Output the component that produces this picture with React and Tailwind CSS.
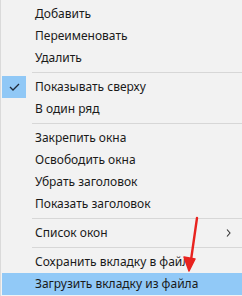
import React from 'react';

const groups = [
  [{ label: 'Добавить' }, { label: 'Переименовать' }, { label: 'Удалить' }],
  [{ label: 'Показывать сверху', checked: true }, { label: 'В один ряд' }],
  [{ label: 'Закрепить окна' }, { label: 'Освободить окна' }, { label: 'Убрать заголовок' }, { label: 'Показать заголовок' }],
  [{ label: 'Список окон', submenu: true }],
  [{ label: 'Сохранить вкладку в файл' }, { label: 'Загрузить вкладку из файла', active: true }],
];

const MenuItem = ({ item }) => (
  <div className={`relative flex h-[22px] items-center ${item.active ? 'bg-[#91c9f7]' : ''}`}>
    <div className="flex h-[22px] w-[24px] items-center justify-center">
      {item.checked && (
        <div className="flex h-[22px] w-[24px] items-center justify-center bg-[#90c8f6]">
          <svg width="11" height="8" viewBox="0 0 11 8" fill="none">
            <path d="M1 4 L4 7 L10 1" stroke="#1e2a3a" strokeWidth="1.3" />
          </svg>
        </div>
      )}
    </div>
    <span className="pl-[9px] text-[12px] text-[#1a1a1a]">{item.label}</span>
    {item.submenu && (
      <svg className="absolute right-[11px] top-[7px]" width="5" height="8" viewBox="0 0 5 8" fill="none">
        <path d="M1 0.5 L4 4 L1 7.5" stroke="#333" strokeWidth="1.1" />
      </svg>
    )}
  </div>
);

export default function App() {
  return (
    <div
      className="relative h-[296px] w-[242px] overflow-hidden border-l border-[#dadada] bg-[#f2f2f2] pl-[1px] pt-[3px]"
      style={{ fontFamily: '"Segoe UI", "Noto Sans", sans-serif' }}
    >
      {groups.map((group, gi) => (
        <div key={gi}>
          {gi > 0 && (
            <div className="flex h-[7px] items-center pl-[30px]">
              <div className="h-px w-full bg-[#d7d7d7]" />
            </div>
          )}
          {group.map((item) => (
            <MenuItem key={item.label} item={item} />
          ))}
        </div>
      ))}

      {/* red arrow annotation */}
      <svg className="absolute left-[180px] top-[214px]" width="22" height="60" viewBox="0 0 22 60" fill="none">
        <path d="M16 4 L10 46" stroke="#e8231f" strokeWidth="2.4" strokeLinecap="round" />
        <path d="M3 43 L8 57 L14 45 Z" fill="#e8231f" stroke="#e8231f" strokeWidth="1.5" strokeLinejoin="round" />
      </svg>
    </div>
  );
}
